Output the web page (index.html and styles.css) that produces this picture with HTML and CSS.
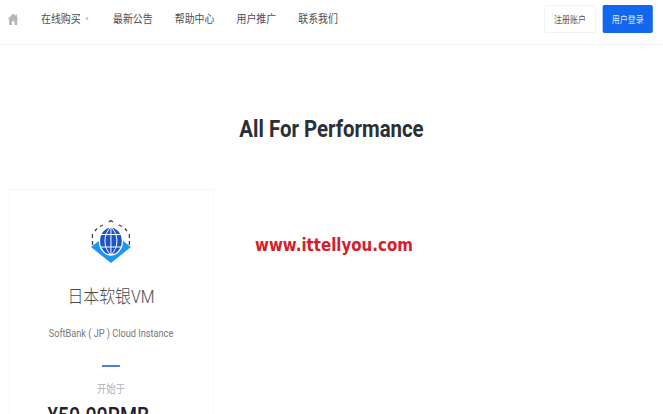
FILE: index.html
```html
<!DOCTYPE html>
<html lang="zh">
<head>
<meta charset="utf-8">
<title>All For Performance</title>
<link rel="stylesheet" href="styles.css">
</head>
<body>
<div class="page">
<header class="nav">
  <svg class="home" viewBox="0 0 12 12" preserveAspectRatio="none"><path d="M6 .5 0 6.200h1.600V12h3V8.200h2.800V12h3V6.200H12L10 4.300V1.200H8.600V3Z" fill="#b4b6b9"/></svg>
  <nav class="links">
    <a class="link buy">在线购买<span class="caret"></span></a>
    <a class="link">最新公告</a>
    <a class="link">帮助中心</a>
    <a class="link">用户推广</a>
    <a class="link">联系我们</a>
  </nav>
  <div class="actions">
    <a class="btn ghost">注册账户</a>
    <a class="btn primary">用户登录</a>
  </div>
</header>
<main class="main">
  <h1 class="title">All For Performance</h1>
  <section class="card">
    <svg class="globe" viewBox="0 0 40 44" preserveAspectRatio="none">
      <path d="M0 28 9 21H31L40 28 20 44Z" fill="#1c96ee"/>
      <path d="M1.500 26V22M1.500 19V15M4 12 6 9.500M9 7.500 12 6M18 3 20 1.500 22 3M28 6 31 7.500M34 9.500 36 12M38.500 15V19M38.500 22V26" fill="none" stroke="#3c4250" stroke-width="1.300"/>
      <ellipse cx="20" cy="22" rx="11.500" ry="14" fill="#1a55c8" stroke="#fff" stroke-width="1.300"/>
      <path d="M20 8V36M20 8C12 15 12 29 20 36M20 8C28 15 28 29 20 36M10 15.500H30M9.500 28H30.500" fill="none" stroke="#fff" stroke-width="1"/>
    </svg>
    <h2 class="name">日本软银VM</h2>
    <p class="desc">SoftBank ( JP ) Cloud Instance</p>
    <span class="rule"></span>
    <p class="from">开始于</p>
    <p class="price">¥50.00RMB<small class="unit">/ 月付</small></p>
  </section>
  <div class="mark">www.ittellyou.com</div>
</main>
</div>
</body>
</html>
```
FILE: styles.css
```css
* { box-sizing: border-box; }
html, body { height: 100%; }
html { overflow: hidden; }
body {
  margin: 0;
  background: #fff;
  overflow: hidden;
  font-family: Roboto, "Noto Sans CJK SC", sans-serif;
  color: #3a3d42;
}
/* The reference is squeezed horizontally: lay out wider, then compress. */
.page {
  width: 780px;
  height: 414px;
  overflow: hidden;
  transform: scaleX(.85);
  transform-origin: 0 0;
}
.nav {
  display: flex;
  align-items: center;
  height: 45px;
  padding: 0 12px 7px 9.400px;
  border-bottom: 1px solid #f6f6f7;
}
.home { flex: none; width: 13px; height: 12px; }
.links {
  display: flex;
  margin-left: 25.800px;
  gap: 25.900px;
}
.link {
  font-size: 11.700px;
  line-height: 16px;
  color: #4a4d52;
  white-space: nowrap;
}
.buy { display: flex; align-items: center; width: 58.800px; }
.caret {
  width: 3px;
  height: 3px;
  margin-left: 6px;
  border-radius: 50%;
  background: #c4c6c9;
}
.actions {
  display: flex;
  gap: 8px;
  margin-left: auto;
}
.btn {
  height: 28px;
  display: flex;
  align-items: center;
  justify-content: center;
  font-size: 9.400px;
  border-radius: 2px;
  white-space: nowrap;
}
.ghost { width: 61px; border: 1px solid #f1f1f3; color: #55585d; }
.primary { width: 59px; background: #1367ee; color: #dfe9fd; }
.main { position: relative; padding: 68px 9.800px 0; }
.title {
  margin: 0;
  text-align: center;
  font-size: 24px;
  line-height: 32px;
  font-weight: 700;
  color: #2b2f36;
}
.card {
  width: 241.600px;
  height: 300px;
  margin-top: 44px;
  padding-top: 29px;
  border: 1px solid #f5f5f6;
  display: flex;
  flex-direction: column;
  align-items: center;
}
.globe { flex: none; width: 47px; height: 44px; }
.name {
  margin: 20px 0 0;
  font-size: 18.700px;
  line-height: 28px;
  font-weight: 300;
  color: #46494e;
}
.desc {
  margin: 16px 0 0;
  font-size: 10.800px;
  line-height: 14px;
  color: #74777c;
}
.rule {
  width: 21px;
  height: 2px;
  margin-top: 24px;
  background: #4f7fd0;
}
.from {
  margin: 16px 0 0;
  font-size: 11px;
  line-height: 14px;
  color: #b0b2b5;
}
.price {
  margin: 7px 0 0;
  font-size: 23px;
  line-height: 26px;
  font-weight: 500;
  color: #1f2228;
  white-space: nowrap;
}
.unit { margin-left: 3px; font-size: 10px; font-weight: 400; color: #8a8c90; }
.mark {
  position: absolute;
  left: 300px;
  top: 188px;
  font-family: "DejaVu Sans", sans-serif;
  font-size: 17.700px;
  line-height: 24px;
  font-weight: 700;
  color: #d5202c;
}
```
